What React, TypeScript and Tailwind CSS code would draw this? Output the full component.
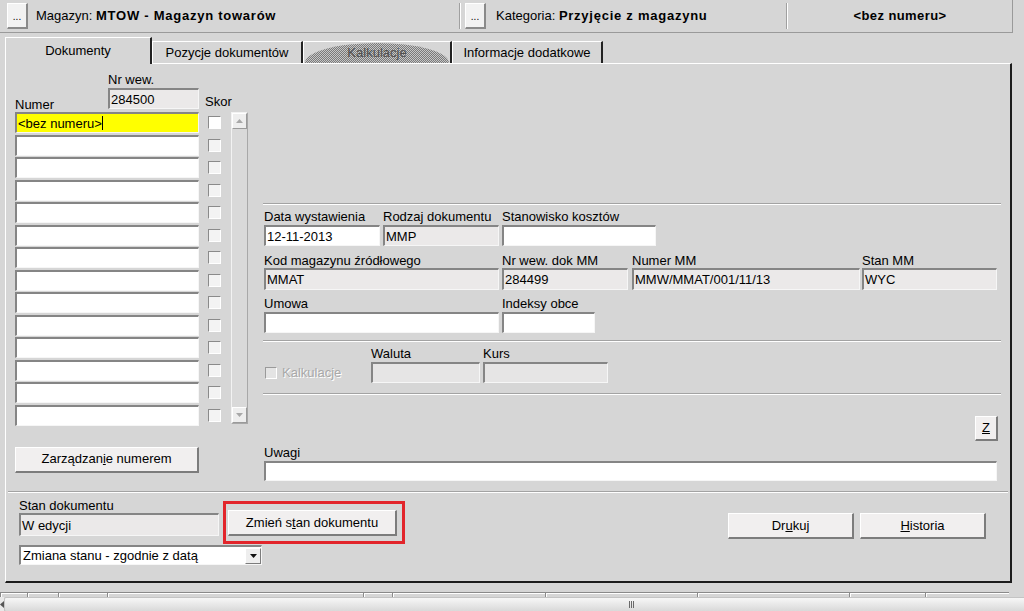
import React from "react"

const sunk =
    "border-t-2 border-l-2 border-t-[#858585] border-l-[#858585] border-b border-r border-b-[#f6f6f6] border-r-[#f6f6f6]"
const raised =
    "border-t border-l border-t-white border-l-white border-b-2 border-r-2 border-b-[#7c7c7c] border-r-[#7c7c7c] bg-[#f1efef]"

const Label = ({ children }: { children: React.ReactNode }) => (
    <div className="h-[15px] leading-[15px] whitespace-nowrap">{children}</div>
)

const Box = ({ className = "", children }: { className?: string; children?: React.ReactNode }) => (
    <div className={`${sunk} ${className} flex items-center pl-[1px] leading-none overflow-hidden whitespace-nowrap`}>
        {children}
    </div>
)

const Btn = ({ className = "", children }: { className?: string; children: React.ReactNode }) => (
    <div className={`${raised} ${className} flex items-center justify-center whitespace-nowrap`}>{children}</div>
)

interface FieldProps {
    label: string
    value?: string
    boxClass: string
}

const Field = ({ label, value, boxClass }: FieldProps) => (
    <div className="flex flex-col">
        <Label>{label}</Label>
        <Box className={boxClass}>{value}</Box>
    </div>
)

const Hr = ({ className = "" }: { className?: string }) => (
    <div className={`h-[2px] border-t border-t-[#a3a3a3] border-b border-b-white ${className}`} />
)

const Groove = () => <div className="my-[3px] w-[2px] border-l border-l-[#a0a0a0] border-r border-r-white" />

const DotsBtn = ({ className = "" }: { className?: string }) => (
    <div
        className={`${className} w-[21px] h-[26px] border-t border-l border-t-white border-l-white border-b-2 border-r-2 border-b-[#8a8a8a] border-r-[#8a8a8a] bg-[#f2f2f2] flex items-end justify-center pb-[5px] text-[10px] leading-none`}
    >
        ...
    </div>
)

const Check = ({ white = false }: { white?: boolean }) => (
    <div
        className={`w-[13px] h-[13px] border-t border-l border-t-[#8a8a8a] border-l-[#8a8a8a] border-b border-r border-b-white border-r-white ${white ? "bg-white" : "bg-[#f3f3f3]"}`}
    />
)

const Arrow = ({ up }: { up: boolean }) => (
    <div className="w-[15px] h-[16px] border-t border-l border-t-white border-l-white border-b border-r border-b-[#9a9a9a] border-r-[#9a9a9a] bg-[#eeeeee] flex items-center justify-center">
        <svg width="7" height="4" viewBox="0 0 7 4">
            {up ? <path d="M0 4 L3.5 0 L7 4 Z" fill="#a8a8a8" /> : <path d="M0 0 L3.5 4 L7 0 Z" fill="#a8a8a8" />}
        </svg>
    </div>
)

const Tab = ({ label, width, active = false }: { label: string; width: string; active?: boolean }) => (
    <div
        className={`${width} ${active ? "h-[27px] -mb-px z-10 bg-[#d6d6d6]" : "h-[22px]"} relative flex items-center justify-center border-t border-l border-t-white border-l-white border-r-2 border-r-[#222222]`}
    >
        {label}
    </div>
)

const TopBar = () => (
    <div className="h-[33px] w-[1013px] flex border-b border-r border-[#9a9a9a]">
        <div className="w-[459px] flex items-center">
            <DotsBtn className="ml-[7px]" />
            <span className="ml-[8px]">
                Magazyn: <b className="tracking-[0.75px]">MTOW - Magazyn towarów</b>
            </span>
        </div>
        <Groove />
        <div className="w-[325px] flex items-center">
            <DotsBtn className="ml-[4px]" />
            <span className="ml-[10px]">
                Kategoria: <b className="tracking-[0.75px]">Przyjęcie z magazynu</b>
            </span>
        </div>
        <Groove />
        <div className="flex-1 flex items-center justify-center font-bold tracking-[0.4px]">&lt;bez numeru&gt;</div>
    </div>
)

const Tabs = () => (
    <div className="h-[30px] flex items-end pl-[5px]">
        <Tab label="Dokumenty" width="w-[147px]" active />
        <Tab label="Pozycje dokumentów" width="w-[151px]" />
        <div className="w-[149px] h-[22px] relative overflow-hidden flex items-center justify-center border-t border-l border-t-white border-l-white border-r-2 border-r-[#222222]">
            <div className="absolute left-[1px] right-[1px] top-[1px] bottom-0 rounded-t-[50%_100%] bg-[image:repeating-conic-gradient(#7a7a7a_0_25%,#c6c6c6_0_50%)] [background-size:2px_2px]" />
            <span className="relative text-[#505050]">Kalkulacje</span>
        </div>
        <Tab label="Informacje dodatkowe" width="w-[151px]" />
    </div>
)

const rows = Array.from({ length: 14 }, (_, i) => i)

const LeftColumn = () => (
    <div className="w-[234px] flex flex-col">
        <div className="mt-[8px] h-[40px] flex items-end">
            <div className="w-[93px] h-[15px] leading-[15px]">Numer</div>
            <div className="w-[91px] flex flex-col mb-[3px]">
                <Label>Nr wew.</Label>
                <Box className="mt-[1px] h-[21px] w-[91px] bg-[#ebe9e9]">284500</Box>
            </div>
            <div className="ml-[6px] mb-[3px] leading-[15px]">Skor</div>
        </div>

        <div className="flex">
            <div className="w-[184px] flex flex-col gap-[1.5px]">
                {rows.map((i) =>
                    i === 0 ? (
                        <Box key={i} className="h-[21px] w-[184px] bg-[#ffff00]">
                            &lt;bez numeru&gt;
                            <span className="inline-block w-px h-[14px] bg-black" />
                        </Box>
                    ) : (
                        <Box key={i} className="h-[21px] w-[184px] bg-white" />
                    )
                )}
            </div>
            <div className="ml-[9px] w-[13px] flex flex-col gap-[1.5px]">
                {rows.map((i) => (
                    <div key={i} className="h-[21px] flex items-center">
                        <Check white={i === 0} />
                    </div>
                ))}
            </div>
            <div className="ml-[10px] w-[17px] h-[312px] flex flex-col justify-between border border-[#f2f2f2] border-r-[#a8a8a8] border-b-[#a8a8a8] bg-[#d9d9d9]">
                <Arrow up />
                <Arrow up={false} />
            </div>
        </div>

        <Btn className="mt-[21px] w-[184px] h-[26px]">
            Zarządzan<u>i</u>e numerem
        </Btn>
    </div>
)

const RightColumn = () => (
    <div className="ml-[14px] w-[738px] mt-[139px] flex flex-col">
        <Hr />
        <div className="mt-[4px] pl-[1px] flex gap-[3px]">
            <Field label="Data wystawienia" value="12-11-2013" boxClass="mt-[1px] h-[21px] w-[116px] bg-white" />
            <Field label="Rodzaj dokumentu" value="MMP" boxClass="mt-[1px] h-[21px] w-[116px] bg-[#ebe9e9]" />
            <Field label="Stanowisko kosztów" boxClass="mt-[1px] h-[21px] w-[154px] bg-white" />
        </div>
        <div className="mt-[7px] pl-[1px] flex">
            <Field label="Kod magazynu źródłowego" value="MMAT" boxClass="h-[22px] w-[235px] bg-[#ebe9e9]" />
            <div className="ml-[3px]">
                <Field label="Nr wew. dok MM" value="284499" boxClass="h-[22px] w-[126px] bg-[#ebe9e9]" />
            </div>
            <div className="ml-[4px]">
                <Field label="Numer MM" value="MMW/MMAT/001/11/13" boxClass="h-[22px] w-[228px] bg-[#ebe9e9]" />
            </div>
            <div className="ml-[2px]">
                <Field label="Stan MM" value="WYC" boxClass="h-[22px] w-[135px] bg-[#ebe9e9]" />
            </div>
        </div>
        <div className="mt-[6px] pl-[1px] flex gap-[3px]">
            <Field label="Umowa" boxClass="mt-[1px] h-[21px] w-[235px] bg-white" />
            <Field label="Indeksy obce" boxClass="mt-[1px] h-[21px] w-[93px] bg-white" />
        </div>
        <Hr className="mt-[7px]" />
        <div className="mt-[4px] pl-[1px] flex items-end">
            <div className="w-[107px] h-[21px] flex items-center gap-[5px] pl-[1px]">
                <div className="w-[12px] h-[12px] border-t border-l border-t-[#9a9a9a] border-l-[#9a9a9a] border-b border-r border-b-white border-r-white bg-[#e4e4e4]" />
                <span className="text-[#a9a9a9] [text-shadow:1px_1px_0_#ffffff]">Kalkulacje</span>
            </div>
            <Field label="Waluta" boxClass="mt-[1px] h-[21px] w-[109px] bg-[#e6e5e5]" />
            <div className="ml-[3px]">
                <Field label="Kurs" boxClass="mt-[1px] h-[21px] w-[125px] bg-[#e6e5e5]" />
            </div>
        </div>
        <Hr className="mt-[10px]" />
        <Btn className="mt-[21px] mr-[3px] self-end w-[23px] h-[25px]">
            <u>Z</u>
        </Btn>
        <div className="mt-[4px] pl-[1px]">
            <Field label="Uwagi" boxClass="mt-px h-[20px] w-[733px] bg-white" />
        </div>
    </div>
)

const BottomSection = () => (
    <>
        <div className="flex items-start">
            <div className="ml-[13px] mt-[5px] w-[200px] flex flex-col">
                <Label>Stan dokumentu</Label>
                <Box className="h-[23px] w-[200px] bg-[#ebe9e9]">W edycji</Box>
            </div>
            <div className="ml-[4px] mt-[8px] w-[182px] h-[43px] border-[3px] border-[#e2252b] pl-[2px] pt-[6px]">
                <Btn className="w-[169px] h-[26px]">
                    Zmień s<u>t</u>an dokumentu
                </Btn>
            </div>
            <div className="ml-auto mr-[24px] mt-[20px] flex gap-[6px]">
                <Btn className="w-[126px] h-[26px]">
                    Dr<u>u</u>kuj
                </Btn>
                <Btn className="w-[126px] h-[26px]">
                    <u>H</u>istoria
                </Btn>
            </div>
        </div>
        <div className={`${sunk} ml-[13px] mt-[1px] w-[243px] h-[20px] bg-white flex items-center justify-between`}>
            <span className="pl-[2px] whitespace-nowrap leading-none">Zmiana stanu - zgodnie z datą</span>
            <div className="w-[16px] h-[16px] border-t border-l border-t-white border-l-white border-b border-r border-b-[#7c7c7c] border-r-[#7c7c7c] bg-[#eeeeee] flex items-center justify-center">
                <svg width="7" height="4" viewBox="0 0 7 4">
                    <path d="M0 0 L3.5 4 L7 0 Z" fill="#111111" />
                </svg>
            </div>
        </div>
    </>
)

const cells = ["w-[27px]", "w-[31px]", "w-[49px]", "w-[256px]", "w-[29px]", "w-[153px]", "w-[152px]", "w-[152px]", "w-[76px]", "w-[84px]"]

const BottomStrip = () => (
    <div className="h-[29px] flex flex-col overflow-hidden">
        <div className="h-[9px]" />
        <div className="h-[5px] flex">
            {cells.map((w, i) => (
                <div key={i} className={`${w} border-t border-t-[#8a8a8a] border-l border-l-[#8a8a8a] shadow-[inset_1px_1px_0_#ffffff]`} />
            ))}
        </div>
        <div className="h-[15px] flex">
            <div className="w-[16px] flex items-center justify-center bg-[#e9e9e9]">
                <svg width="4" height="7" viewBox="0 0 4 7">
                    <path d="M4 0 L0 3.5 L4 7 Z" fill="#555555" />
                </svg>
            </div>
            <div className="w-[1254px] shrink-0 rounded-[2px] border border-[#c4c4c4] bg-gradient-to-b from-[#f7f7f7] to-[#d9d9d9] flex items-center justify-center">
                <div className="flex gap-[1px]">
                    <div className="w-px h-[7px] bg-[#6a6a6a]" />
                    <div className="w-px h-[7px] bg-[#6a6a6a]" />
                    <div className="w-px h-[7px] bg-[#6a6a6a]" />
                </div>
            </div>
        </div>
    </div>
)

export default function App() {
    return (
        <div className="w-[1024px] h-[611px] bg-[#d6d6d6] overflow-hidden font-['Liberation_Sans',Arial,sans-serif] text-[13px] text-black">
            <TopBar />
            <Tabs />
            {/* main panel */}
            <div className="ml-[5px] w-[1007px] h-[520px] flex flex-col border-t border-l border-t-white border-l-white border-r-2 border-b-2 border-r-[#1c1c1c] border-b-[#1c1c1c]">
                <div className="flex pl-[9px]">
                    <LeftColumn />
                    <RightColumn />
                </div>
                <Hr className="mt-[10px] mx-[2px]" />
                <BottomSection />
            </div>
            <BottomStrip />
        </div>
    )
}
